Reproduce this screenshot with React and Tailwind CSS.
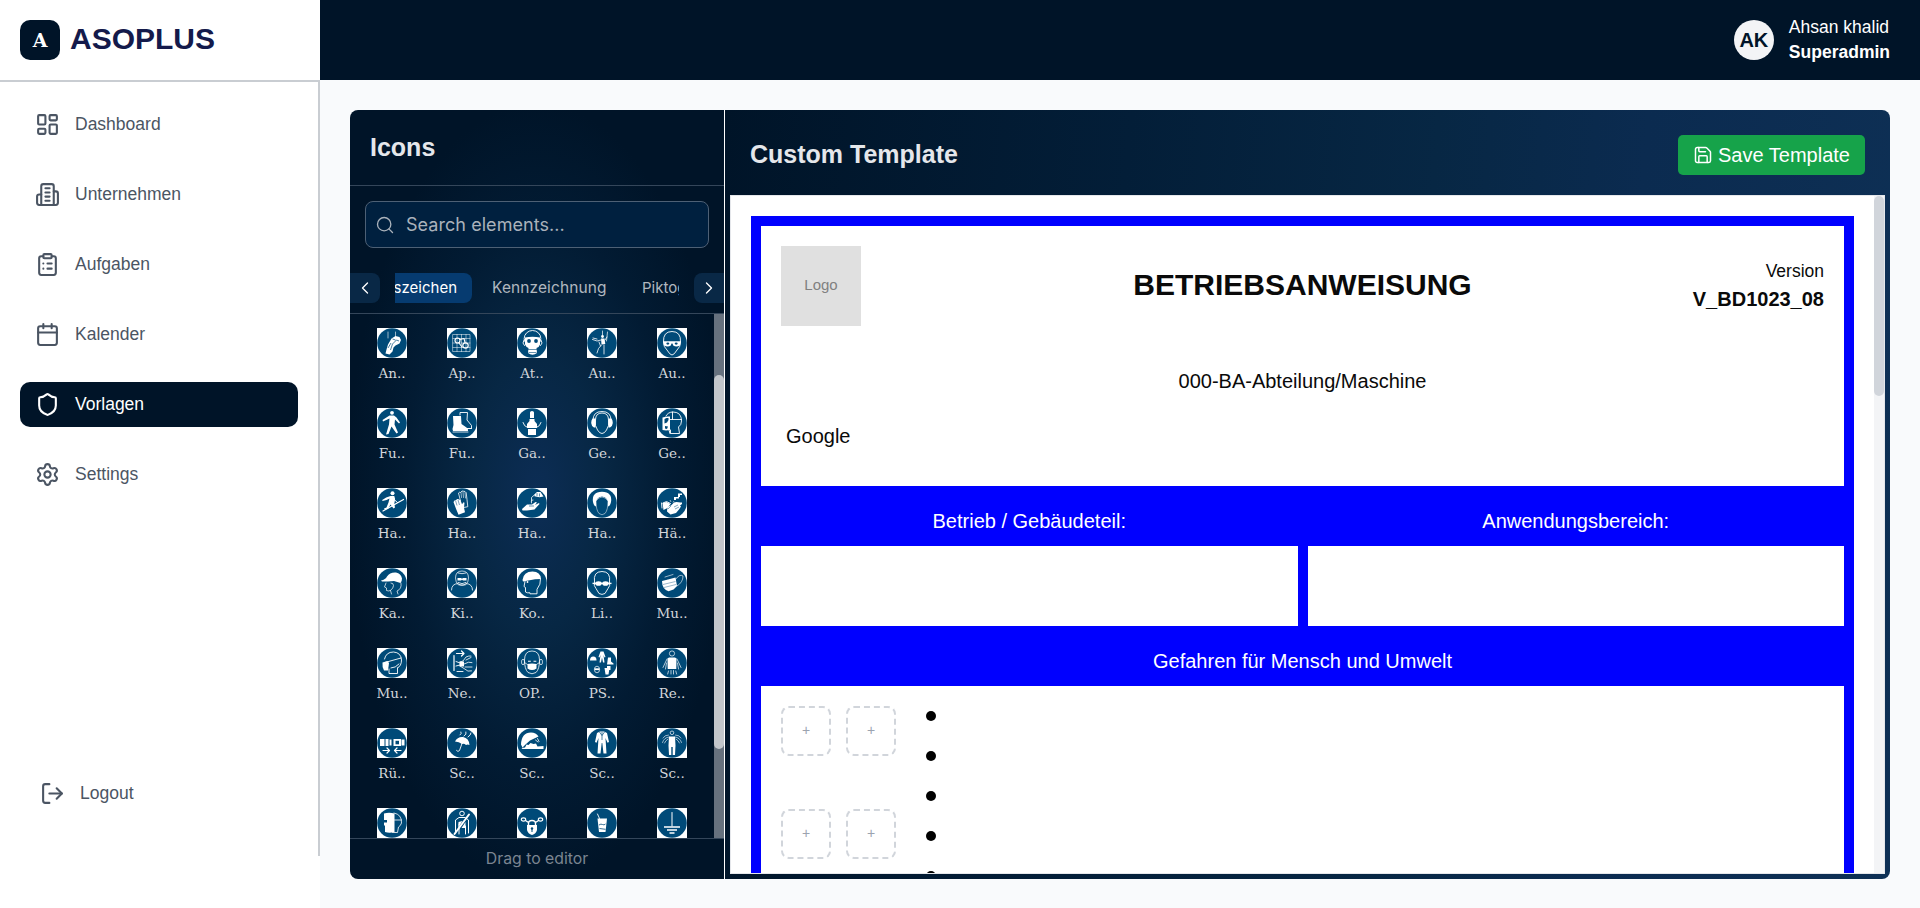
import React from "react";
import {
  LayoutDashboard,
  ClipboardList,
  Calendar,
  Shield,
  Settings,
  LogOut,
  Save,
  Search,
  ChevronLeft,
  ChevronRight,
} from "lucide-react";

const BLUE = "#004a78";

/* White filled shape, white outline and blue filled shape inside a sign. */
const W = ({ d }) => <path d={d} fill="#fff" />;
const L = ({ d, w = 1 }) => (
  <path d={d} fill="none" stroke="#fff" strokeWidth={w} strokeLinecap="round" strokeLinejoin="round" />
);
const B = ({ d }) => <path d={d} fill={BLUE} />;
const K = ({ d, w = 1 }) => <path d={d} fill="none" stroke={BLUE} strokeWidth={w} />;
const O = ({ x, y, r, ry, w = 1 }) => (
  <ellipse cx={x} cy={y} rx={r} ry={ry || r} fill="none" stroke="#fff" strokeWidth={w} />
);
const D = ({ x, y, r, ry, c = "#fff" }) => <ellipse cx={x} cy={y} rx={r} ry={ry || r} fill={c} />;

const SIGNS = [
  ["An..", <><L d="M11 4v6M18.500 4v5" w={0.6} /><W d="M8.500 25.500l1-4 1.500-5 3.500-6 4-2.500 4 1 1.500 3-1.500 3.500-4 2-2 2-1 4-3 3z" /><K d="M11 20l3-5M13.500 22l2-6 4-4 2.500 1M15.500 11l3 1" w={0.7} /></>],
  ["Ap..", <><L d="M6 6.500h17v17H6zM10 6.500v17M14.500 6.500v17M19 6.500v17M6 10.500h17M6 15h17M6 19.500h17" w={0.5} /><O x={10.500} y={12.500} r={2.500} w={1.200} /><O x={18.500} y={17.500} r={2.700} w={1.200} /><L d="M13 11.500l4-1 1 4M12 15l3 4" w={1.100} /></>],
  ["At..", <><O x={15.500} y={10.500} r={8.300} ry={8} w={0.9} /><W d="M8 9.500q7.500-1.500 15 0v7q-1 3-3.500 3.500l.5 5q-4.500 3.500-9 0l.5-5Q9 19 8 16.500z" /><D x={12} y={13} r={1.900} c={BLUE} /><D x={19} y={13} r={1.900} c={BLUE} /><L d="M7 12l-1 3 1.500 2.500M24 12l1 3-1.500 2.500" w={0.9} /><K d="M11 21.500h9M11.500 24.500h8" w={0.6} /></>],
  ["Au..", <><L d="M15.500 3v4M20.500 4l-1 9" w={0.7} /><D x={15.500} y={8.500} r={1.400} /><W d="M14 10.500h3.500l.8 5.500-3.800.5z" /><L d="M14 12l-4 1-4.500-1.500M18 12l2-3M14.500 17l-3 3.500-1.500 4.500M17 17v9M12 14l1.500 4M6 10l4 1" w={0.8} /></>],
  ["Au..", <><path d="M6.500 14Q6 3.500 15 3.500T23.500 14q0 5-3.500 8-3 5-5 5t-5-5q-3.500-3-3.500-8z" fill="none" stroke="#fff" strokeWidth=".9" /><W d="M6 13.200h18l-.8 4q-3.700 2.500-7 .3l-.7-2h-1l-.7 2q-3.300 2.200-7-.3z" /><D x={10.800} y={15.600} r={1.500} ry={1.100} c={BLUE} /><D x={19.200} y={15.600} r={1.500} ry={1.100} c={BLUE} /></>],
  ["Fu..", <><D x={15} y={4.800} r={1.900} /><W d="M12.500 7.500h4.500l2.500 2 3.500 5-1 1-4-4-.5 5 3.500 8-1.500 1-5-7-3 7.500-2.500.5 3-10 .5-6-6.500 3-.5-1.500z" /></>],
  ["Fu..", <><L d="M13 7V4.500h7.500L20 12l4.500 5.500v3h-6" w={0.9} /><W d="M6 8h8l.5 8 5 3.500q2 1 1.500 3.500H6q-1-2 .5-6z" /><L d="M6 24h15M20 20.500h4.500" w={0.8} /></>],
  ["Ga..", <><W d="M13 4.500q0-1.500 2-1.500t2 1.500v5.500h-4zM12.500 11h5v2l2.500 3v4H10v-4l2.500-3zM11 21h8v6h-8z" /><L d="M6 14.500q1 4 4.500 5M24 14.500q-1 4-4.500 5" w={0.9} /></>],
  ["Ge..", <><path d="M8.500 12q0-7 6.500-7t6.500 7q1 6-2 10-2 3.500-4.500 3.500T10.500 22q-3-4-2-10z" fill="none" stroke="#fff" strokeWidth=".9" /><L d="M6 12q0-8.500 9-8.500T24 12" w={0.9} /><W d="M5.500 10.500h3v9H7q-2.500-1-2.800-4.500 0-3 1.300-4.500zM24.500 10.500h-3v9H23q2.500-1 2.800-4.500 0-3-1.300-4.500z" /></>],
  ["Ge..", <><L d="M9 8q2-4 7-4 8.500 0 8.500 9 0 4-3 6l1 6.500h-9V22M15.500 4v7.500M13 11.500h11.500" w={0.9} /><path d="M5.500 9.500Q10 8 13 8.500V22q-4 .8-7.500 0z" fill="#fff" /><B d="M7.500 11l2-1h2v2l-1.500 2.500-2.500 1zM8 18l3 .5-1 2.500-2-.5z" /><L d="M12 22l1 3.500" /></>],
  ["Ha..", <><D x={15.500} y={5.200} r={2} /><W d="M13.500 8h3.800l.8 3-.8 5 .7 3.500-1.500 1-3-4-2.500 4.500-3.500.5-.5-1 2.500-1 2-5 1-4-3 1.500-4 1-.3-1 4-2.500z" /><L d="M6 23L26.500 11.500" w={1.200} /><L d="M17 11.500l3.500 3" w={1} /></>],
  ["Ha..", <><path d="M13.500 13l-2-8 1.200-.8.8.3L15 3l1.300.2L18 3.500l1.200 1.200.8 7 .8 7-5 1" fill="none" stroke="#fff" strokeWidth=".8" /><L d="M14 4.500l.5 5M16 4l.5 5.500M18 4.500l.5 5.500" w={0.6} /><W d="M6.500 14l1.500-2 1 .2 1-1.200 1.700.3 1.800 1 1.500 4 1.500-2 1 .5-.5 5 1 4.500-6.500 2.500-2.500-6z" /><K d="M8.500 12.500l1.500 5M11 12l1.500 5" w={0.5} /></>],
  ["Ha..", <><L d="M14.500 13V9.500l4-3.500 2-1.500M16 12q-2.500 0-1.500 3" w={0.8} /><W d="M17.500 6.500l2.500-2.500h3.500l3 4.500-4 .8-5-1zM5 21l5-4.500h5l3.500-2.500 1.500.5-2 2.500 4-2 .5 1-5 5.500-7.500 1-4.500 0z" /><K d="M20 5v3M22.500 5.500v3M12 18h5" w={0.6} /></>],
  ["Ha..", <><W d="M6 14Q4.500 4 15 3.800 25.500 4 24 14q-1 4.500-3.500 4.500 1-10-5.500-10T9.500 18.500Q7 18.500 6 14z" /><path d="M9 13q6-8 12 0 0 9-3 12.500-3 2.500-6 0Q9 22 9 13z" fill={BLUE} stroke="#fff" strokeWidth=".5" /></>],
  ["Hä..", <><W d="M17 9h4V6.500h2V9h-1v1.500h-3V12h-2zM21 5.500h4V7h-4z" /><path d="M16 14.500l1-1.500M14 14l-1-2" stroke="#fff" strokeWidth=".6" /><L d="M6 15l3.500-1.500 4 2M5 20l-.5-5" w={0.9} /><W d="M10 23.500q0-5 4-6l3-3 2.500-.5 4 .5 1.500 0 0 1.500-2 1.500 1 1-2 3-3 3.500-5.500 1.500zM5.500 15l4-1 4 2-3 4-4 2z" /><K d="M17 19l4-2M18 21l4-2M11 21l3-3" w={0.5} /></>],
  ["Ka..", <><W d="M4 12.500q4.500-1 6-4Q13 4 19 4.500q5 1 6 6 0 3-1.500 4.500L17 13l-6 .5H5z" /><L d="M9 15l-1.500 4 2 1v2.500q2 1 4 0M24 15q1 6-4 8l1 3M14 15q2.500 0 2.500 2.500t-3 5l1 3.500" w={0.7} /></>],
  ["Ki..", <><path d="M8.500 10Q8.500 3 15 3t6.500 7q0 4.500-3 7h-7q-3-2.500-3-7z" fill="none" stroke="#fff" strokeWidth=".7" /><W d="M10.500 10h3.500l1 .8 1-.8h3.500v2.500h-3.500l-1-.8-1 .8h-3.500z" /><L d="M11 5q4 1.500 8 0M11 14.500q4 2.500 8 0M4.500 22q0-6 6.500-6.500 4 3.500 8 0 6.500.5 6.500 6.500" w={0.8} /></>],
  ["Ko..", <><W d="M5.500 12Q6.500 3.500 15.500 3.500q8 0 8.500 7.500l-6 .3-12 2.200z" /><L d="M8 13.500l-1 5 1.500 1v4.500l2 .8h2.500v1h7v-4.500q4-5 3.500-10" w={0.9} /><D x={10.500} y={14} r={0.9} /></>],
  ["Li..", <><path d="M7.500 14Q6 3.500 15 3.500T22.500 14q1 4-1.500 6.500l-3 5q-3 1.800-6 0l-3-5Q6.500 18 7.500 14z" fill="none" stroke="#fff" strokeWidth=".9" /><D x={11.500} y={15.500} r={3.200} ry={2.300} /><D x={18.500} y={15.500} r={3.200} ry={2.300} /><W d="M5.500 14.700h19v1.400h-19z" /></>],
  ["Mu..", <><W d="M5 13l6-1.500 7.500-2 1.500 8.500-3.500 3.500-5 1.800Q5 21 5 13z" /><L d="M18.500 11.500q4-6 7.500-3.500 0 6.500-6 10M8 9l8-2.500" w={0.6} /><K d="M6 16.500l12.500-3M7 19.500l12-3" w={0.4} /></>],
  ["Mu..", <><L d="M7.500 11Q9 4 16.500 4 24 4.500 24.500 12q0 6-4 8M12 21v4.500h8.500V20M8 14.500L24 10M14 20q4.500 0 8-4" w={0.9} /><W d="M5.500 14.500l5-1.500 1.500 2-1 7.500H7q-2-3-1.500-8z" /></>],
  ["Ne..", <><L d="M7 7.500v15M9.500 5.500h7.500M14.500 3l2.500 2.500L14.500 8" w={1.200} /><L d="M13 14l3-1 3-4q3-1.500 5-1M17 16q5-3 8-1.500M13 18l4 2.500q4 4 7.500 2.500M18 19h7M19 12l5-2.500" w={0.8} /><W d="M12.500 13.500h4.500v5h-4.500z" /><L d="M9 13.500l4 1.500M9 18l4-1M10 23.500h6" w={0.9} /></>],
  ["OP..", <><path d="M7.500 12q0-9 7.500-9t7.500 9q0 9-3.500 12.500-4 2.500-8 0Q7.500 21 7.500 12z" fill="none" stroke="#fff" strokeWidth=".8" /><O x={6} y={14} r={1.500} ry={2.800} w={0.7} /><O x={24} y={14} r={1.500} ry={2.800} w={0.7} /><W d="M10.500 16q4.500-1 9 0v4.500q-4.500 3-9 0zM11 12.800h2.800v1H11zM16.500 12.800h2.800v1h-2.800z" /><L d="M7.500 14.500l3 2M22.500 14.500l-3 2" w={0.7} /></>],
  ["PS..", <><W d="M13.500 3.500h3l2 5.500-1 .5-1-2.500 1 7.500H16l-1-5-1 5h-1.500l1-7.500-1 2.500-1-.5zM3 12.500q0-4 3.300-4t3.200 4zM21 9.500h3v4l2.500 2v1H20zM17.500 20h5l-1 6.500h-3zM20 18h3.500v4H20z" /><O x={10} y={21.500} r={2.600} ry={3.300} w={0.7} /><W d="M7.500 20.300h5v1.800h-5z" /></>],
  ["Re..", <><O x={15} y={5.500} r={2.600} w={0.7} /><W d="M12 9.500h6l1.500 1-.2 10.500h-8.600l-.2-10.500z" /><L d="M10 11l-4 8.500M20 11l4 8.500M9.500 15l-1 6M20.500 15l1 6M11.500 23l-.8 3M14 22.500v3.500M16.500 22.500v3.500M18.800 23l.8 3" w={0.7} /></>],
  ["Rü..", <><W d="M3 11h4.500v7H3zM8.500 11h3v7h-3zM12.500 11.500h2v6h-2zM16.500 11H24v7h-7.500zM24.500 11.500h3v6h-3z" /><B d="M18.500 12.800h3.500v3.500h-3.500z" /><L d="M6 22.500h6.500M10 20l2.500 2.500L10 25M24 22.500h-6.500M20 20l-2.500 2.500L20 25" w={1.200} /></>],
  ["Sc..", <><W d="M8 13.500q2.500-5 8-4.500 6 1 6.500 8-2-1-3.500 0-2-2-4-1-3-2.500-7-2.500z" /><L d="M15.500 14l-3 8.500q-1.500 2-3 0M13 7q2-1 1-3M17 8q3-1.500 2-4M21 9q3-2 3-4" w={0.9} /></>],
  ["Sc..", <><W d="M4 16.500Q4.500 4.500 14 4.500q5 0 7.500 4L13 12.500l-4.500 4-3 3zM8 19.500l1.500-3 2 .5 2-2 3 1 2.500-.5 1.500 3 6-.5v3H5.500L4.500 20z" /><L d="M18.500 12l2.500 2M20.500 10.500l1.500 3" w={0.8} /></>],
  ["Sc..", <><W d="M13 3.500h4l3 1.500 2 9-1.500.8-2-4.800 1 15.500h-3L15.300 15h-.6L13.500 25.500h-3l1-15.500-2 4.800L8 14l2-9z" /><K d="M15 4v8M12.500 4l2.500 3.500L17.500 4" w={0.7} /></>],
  ["Sc..", <><O x={15} y={4.800} r={1.800} w={0.7} /><W d="M12 8.500h6l.5 9L18 27h-2.300v-8h-1.400v8H12l-.5-9.500z" /><L d="M12 9q-5 .5-6.500 5.500M18 9q5 .5 6.500 5.500M11 11q-2.500 1.500-3.500 4M19 11q2.500 1.500 3.500 4M11.500 7Q7.500 7 6 10M18.500 7q4 0 5.500 3" w={0.6} /></>],
  ["", <><path d="M7 5.500q5-1.500 10.500 0V24q-5 1.500-9.500 0v-6l-1-1v-2.500h3V12H7z" fill="#fff" /><L d="M17 5q8 1.500 7.500 10-1 3-3 4l-1 5.500h-5M17.500 12h7" w={0.8} /></>],
  ["", <><O x={15} y={5.500} r={2.300} w={1} /><L d="M8.500 25V12l3.500-2.500h6L21.500 12v13M12 16v10M18.500 18v8" w={1} /><L d="M7.500 26L22 6.500" w={2} /><W d="M11.500 14l4-1-4 6zM18.500 14v6h-4z" /></>],
  ["", <><O x={6.500} y={11.500} r={2.200} ry={1.600} w={1.100} /><O x={23.500} y={11.500} r={2.200} ry={1.600} w={1.100} /><L d="M8.500 12.500l3 2M21.500 12.500l-3 2M11.500 18v-2.500q0-3 3.500-3t3.500 3V18" w={1.400} /><W d="M10 17h10v5q-1 4-5 5-4-1-5-5z" /><D x={15} y={20.500} r={1.200} c={BLUE} /><B d="M14.500 21h1v3h-1z" /></>],
  ["", <><W d="M10.500 10.500h9.500L18.500 24h-6.500z" /><L d="M12.500 10.500l-2-4.500" w={0.9} /><K d="M12 17q2-1.500 3.500-.5t3-.5M12.500 20.500l6 .8" w={0.8} /></>],
  ["", <><L d="M15 4.500V18" w={1} /><path d="M7 19h16M10 22h10M12.500 25h5" stroke="#fff" strokeWidth="1.400" /></>],
];

const Sign = ({ label, children }) => (
  <div className="flex h-20 flex-col items-center">
    <svg width="30" height="30" viewBox="0 0 30 30" className="block shrink-0 bg-white">
      <circle cx="15" cy="15" r="14.800" fill={BLUE} />
      {children}
    </svg>
    {label && (
      <span className="mt-1.5 font-['DejaVu_Serif',serif] text-[13.500px] leading-[18px] text-[#d3d6da]">{label}</span>
    )}
  </div>
);

const Building = ({ size = 25 }) => (
  <svg width={size} height={size} viewBox="0 0 24 24" fill="none" stroke="currentColor" strokeWidth="2" strokeLinecap="round" strokeLinejoin="round" className="shrink-0">
    <path d="M6 22V4a2 2 0 0 1 2-2h8a2 2 0 0 1 2 2v18Z" />
    <path d="M6 12H4a2 2 0 0 0-2 2v6a2 2 0 0 0 2 2h2" />
    <path d="M18 9h2a2 2 0 0 1 2 2v9a2 2 0 0 1-2 2h-2" />
    <path d="M10 6h4M10 10h4M10 14h4M10 18h4" />
  </svg>
);

const NAV = [
  { label: "Dashboard", Icon: LayoutDashboard },
  { label: "Unternehmen", Icon: Building },
  { label: "Aufgaben", Icon: ClipboardList },
  { label: "Kalender", Icon: Calendar },
  { label: "Vorlagen", Icon: Shield, active: true },
  { label: "Settings", Icon: Settings },
];

function Sidebar() {
  return (
    <aside className="flex h-full w-80 shrink-0 flex-col bg-white">
      <div className="flex h-[82px] shrink-0 items-center gap-2.5 border-b-2 border-[#c9cdd2] px-5">
        <div className="flex size-10 items-center justify-center rounded-[10px] bg-[#001428] font-['DejaVu_Serif',serif] text-[19px] font-bold text-white">
          A
        </div>
        <span className="pb-[3px] text-[30px] font-bold text-[#141a4b]">ASOPLUS</span>
      </div>
      <nav className="flex h-[774px] flex-col justify-between border-r-2 border-[#c9cdd2] pt-5 pr-5 pb-10 pl-5">
        <div className="flex flex-col gap-[25px]">
          {NAV.map(({ label, Icon, active }) => (
            <a
              key={label}
              className={
                active
                  ? "flex h-[45px] items-center gap-[15px] rounded-[10px] bg-[#001428] px-[15px] text-white"
                  : "flex h-[45px] items-center gap-[15px] rounded-[10px] px-[15px] text-[#4b5563]"
              }
            >
              <Icon size={25} />
              <span className="text-[17.500px]">{label}</span>
            </a>
          ))}
        </div>
        <a className="flex h-[45px] items-center gap-[15px] px-5 text-[#4b5563]">
          <LogOut size={25} />
          <span className="text-[17.500px]">Logout</span>
        </a>
      </nav>
    </aside>
  );
}

function IconPanel() {
  return (
    <section className="flex w-[375px] shrink-0 flex-col border-r border-white bg-[radial-gradient(ellipse_at_50%_50%,#0c2d55_0%,#072744_25%,#021b33_50%,#001428_72%)] font-[Inter,sans-serif]">
      <div className="flex h-[76px] shrink-0 items-center border-b border-[#34465a] px-5">
        <h2 className="font-['Liberation_Sans',sans-serif] text-[25px] font-bold text-[#e5e7eb]">Icons</h2>
      </div>
      <div className="flex flex-col px-[15px] pt-[15px]">
        <div className="flex h-[47px] items-center gap-[11px] rounded-lg border border-[#4d6075] bg-[#00203f] pl-[9px] text-[#aab2bb]">
          <Search size={20} strokeWidth={1.6} />
          <span className="text-[18px] tracking-[0.05px]">Search elements...</span>
        </div>
      </div>
      <div className="mt-[25px] flex h-[41px] shrink-0 items-start justify-between border-b border-[#34465a] text-[15px]">
        <button className="flex h-[30px] w-[30px] items-center justify-center rounded-r-lg bg-[#092846] text-white">
          <ChevronLeft size={20} strokeWidth={1.6} />
        </button>
        <div className="flex w-[284px] items-center gap-[20px] overflow-hidden">
          <div className="flex h-[30px] w-[77px] shrink-0 items-center justify-end rounded-r-lg bg-[#063b70] pr-[15px] text-white">
            szeichen
          </div>
          <span className="w-[115px] shrink-0 text-[15.500px] tracking-[0.1px] text-[#b0b7bf]">Kennzeichnung</span>
          <span className="ml-[15px] shrink-0 text-[15px] text-[#b0b7bf]">Piktogramme</span>
        </div>
        <button className="flex h-[30px] w-[30px] items-center justify-center rounded-l-lg bg-[#092846] text-white">
          <ChevronRight size={20} strokeWidth={1.6} />
        </button>
      </div>
      <div className="flex h-[524px] shrink-0 overflow-hidden">
        <div className="grid w-[364px] shrink-0 grid-cols-5 content-start px-[7px] pt-3.5">
          {SIGNS.map(([label, art], i) => (
            <Sign key={i} label={label}>
              {art}
            </Sign>
          ))}
        </div>
        <div className="h-full w-2.5 bg-[#66717e] pt-[61px]">
          <div className="h-[374px] w-2.5 rounded-full bg-[#c2c6cb]" />
        </div>
      </div>
      <div className="flex h-[41px] items-center justify-center border-t border-[#34465a] text-[15.800px] text-[#7b8591]">
        Drag to editor
      </div>
    </section>
  );
}

const Slot = () => (
  <div className="flex size-[50px] items-center justify-center rounded-lg border-2 border-dashed border-[#d1d5db] pb-px text-[14px] text-[#9ca3af]">
    +
  </div>
);

function Document() {
  return (
    <div className="flex h-[900px] flex-1 flex-col border-[10px] border-[#0000ff] text-[20px] text-[#0a0a0a]">
      <div className="flex h-[260px] shrink-0 flex-col p-5">
        <div className="grid h-20 grid-cols-[1fr_auto_1fr] items-center">
          <div className="flex size-20 items-center justify-center bg-[#e0e0e0] pb-0.5 text-[15px] text-[#808080]">Logo</div>
          <h1 className="pb-[3px] text-[30px] font-bold">BETRIEBSANWEISUNG</h1>
          <div className="flex flex-col items-end pb-px">
            <span className="text-[17.500px] leading-[27px]">Version</span>
            <span className="font-bold leading-[29px]">V_BD1023_08</span>
          </div>
        </div>
        <div className="mt-10 flex h-[30px] items-center justify-center">000-BA-Abteilung/Maschine</div>
        <div className="mt-[25px] flex h-[30px] items-center px-[5px]">Google</div>
      </div>
      <div className="grid h-[60px] shrink-0 grid-cols-2 gap-2.5 bg-[#0000ff] pt-2.5 text-center leading-[50px] text-white">
        <div>Betrieb / Gebäudeteil:</div>
        <div>Anwendungsbereich:</div>
      </div>
      <div className="grid h-20 shrink-0 grid-cols-2 gap-2.5 bg-[#0000ff]">
        <div className="bg-white" />
        <div className="bg-white" />
      </div>
      <div className="h-[60px] shrink-0 bg-[#0000ff] pt-2.5 text-center leading-[50px] text-white">
        Gefahren für Mensch und Umwelt
      </div>
      <div className="flex flex-1 gap-[30px] p-5">
        <div className="grid grid-cols-2 content-start gap-x-[15px] gap-y-[53px]">
          <Slot />
          <Slot />
          <Slot />
          <Slot />
        </div>
        <div className="flex flex-col gap-[30px] pt-[5px]">
          {[0, 1, 2, 3, 4].map((n) => (
            <span key={n} className="size-2.5 rounded-full bg-black" />
          ))}
        </div>
      </div>
    </div>
  );
}

function Editor() {
  return (
    <section className="flex min-w-0 flex-1 flex-col bg-[linear-gradient(95deg,#001428_0%,#031e38_33%,#072744_58%,#0b2b50_75%,#0e3055_100%)] px-[5px] pb-[5px]">
      <div className="flex h-[85px] shrink-0 items-center justify-between px-5 pt-0">
        <h2 className="pt-[5px] text-[25px] font-bold text-[#e5e7eb]">Custom Template</h2>
        <button className="mt-[5px] flex h-10 w-[187px] items-center gap-[5px] rounded-[5px] bg-[#16a34a] pl-[15px] text-[20px] whitespace-nowrap text-white">
          <Save size={20} strokeWidth={1.8} />
          Save Template
        </button>
      </div>
      <div className="flex h-[679px] shrink-0 overflow-hidden border border-[#e5e7eb] bg-white">
        <div className="flex flex-1 items-start p-5">
          <Document />
        </div>
        <div className="w-2.5 bg-[#f3f4f6]">
          <div className="h-[200px] w-2.5 rounded-full bg-[#d1d5db]" />
        </div>
      </div>
    </section>
  );
}

export default function App() {
  return (
    <div className="flex h-[908px] w-[1920px] overflow-hidden bg-[#f9fafc] font-['Liberation_Sans',Arial,sans-serif]">
      <Sidebar />
      <div className="flex flex-1 flex-col">
        <header className="flex h-20 shrink-0 items-center justify-end gap-[15px] bg-[#001428] pr-[30px] text-white">
          <div className="flex size-10 items-center justify-center rounded-full bg-[#f3f4f6] text-[20px] font-bold text-[#001428]">
            AK
          </div>
          <div className="flex flex-col text-[17.500px] leading-[25px]">
            <span>Ahsan khalid</span>
            <span className="font-bold">Superadmin</span>
          </div>
        </header>
        <main className="flex-1 p-[30px]">
          <div className="flex h-[769px] w-[1540px] overflow-hidden rounded-lg">
            <IconPanel />
            <Editor />
          </div>
        </main>
      </div>
    </div>
  );
}
